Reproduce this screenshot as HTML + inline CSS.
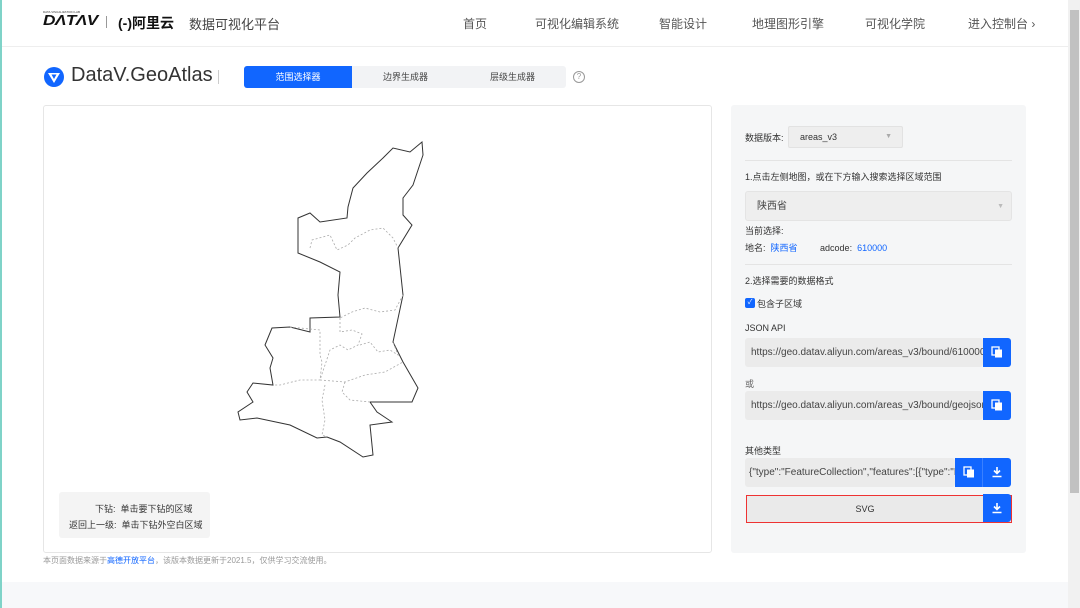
<!DOCTYPE html>
<html><head><meta charset="utf-8"><style>
*{margin:0;padding:0;box-sizing:border-box}
body{width:1080px;height:608px;overflow:hidden;background:#fff;font-family:"Liberation Sans","Noto Sans CJK SC",sans-serif;position:relative;color:#333}
.a{position:absolute;white-space:nowrap}
.nav{font-size:12px;color:#555;top:15px}
.f{font-size:9px;color:#333}
.inp{position:absolute;background:#ebebeb;border-radius:3px;font-size:10px;color:#444;line-height:29px;padding-left:6px;overflow:hidden;white-space:nowrap}
.btn{position:absolute;background:#1166ff;border-radius:0 3px 3px 0;width:28px;height:29px}
.btn svg{position:absolute;left:8px;top:8px}
</style></head><body>
<div class="a" style="left:0;top:0;width:2px;height:608px;background:#7fd3c8"></div>
<!-- header -->
<div class="a" style="left:43px;top:12px;font-weight:900;font-style:italic;font-size:15px;letter-spacing:-0.5px;color:#111;transform:scaleX(1.15);transform-origin:left">DΛTΛV</div>
<div class="a" style="left:43px;top:10px;font-size:3px;color:#333">DATA VISUALIZATION LAB</div>
<div class="a" style="left:106px;top:16px;width:1px;height:12px;background:#999"></div>
<div class="a" style="left:118px;top:13px;font-size:14px;font-weight:bold;color:#111">(-)阿里云</div>
<div class="a" style="left:189px;top:14px;font-size:13px;color:#444">数据可视化平台</div>
<div class="a nav" style="left:463px">首页</div>
<div class="a nav" style="left:535px">可视化编辑系统</div>
<div class="a nav" style="left:659px">智能设计</div>
<div class="a nav" style="left:752px">地理图形引擎</div>
<div class="a nav" style="left:865px">可视化学院</div>
<div class="a nav" style="left:968px">进入控制台 ›</div>
<div class="a" style="left:2px;top:46px;width:1066px;height:1px;background:#eee"></div>
<!-- scrollbar -->
<div class="a" style="left:1068px;top:0;width:12px;height:608px;background:#f1f1f1"></div>
<div class="a" style="left:1070px;top:10px;width:9px;height:483px;background:#c1c1c1"></div>
<!-- title row -->
<svg class="a" style="left:43px;top:66px" width="22" height="22" viewBox="0 0 22 22"><circle cx="11" cy="11" r="10" fill="#1166ff"/><path d="M5 7 L11 17 L17 7 Z M8.5 8.5 L13.5 8.5 L11 13 Z" fill="#fff" fill-rule="evenodd"/></svg>
<div class="a" style="left:71px;top:64px;font-size:20px;color:#333">DataV.GeoAtlas</div>
<div class="a" style="left:218px;top:70px;width:1px;height:14px;background:#ccc"></div>
<div class="a" style="left:244px;top:66px;width:322px;height:22px;background:#f2f3f5;border-radius:3px"></div>
<div class="a" style="left:244px;top:66px;width:108px;height:22px;background:#1166ff;border-radius:3px 0 0 3px;color:#fff;font-size:9px;line-height:22px;text-align:center">范围选择器</div>
<div class="a" style="left:352px;top:66px;width:107px;line-height:22px;text-align:center;font-size:9px;color:#444">边界生成器</div>
<div class="a" style="left:459px;top:66px;width:107px;line-height:22px;text-align:center;font-size:9px;color:#444">层级生成器</div>
<div class="a" style="left:573px;top:71px;width:12px;height:12px;border:1px solid #999;border-radius:50%;font-size:8px;line-height:10px;text-align:center;color:#999">?</div>
<!-- map box -->
<div class="a" style="left:43px;top:105px;width:669px;height:448px;border:1px solid #e6e6e6;border-radius:3px"></div>
<svg class="a" style="left:0;top:0" width="720" height="560">
<path d="M422 142 L423 155 L413 185 L403 198 L403 215 L412 225 L398 248 L403 295 L393 342 L403 362 L418 388 L412 402 L370 402 L377 412 L392 422 L370 425 L373 455 L363 457 L340 442 L327 437 L317 438 L290 425 L257 418 L240 420 L238 412 L253 402 L247 392 L253 383 L273 385 L270 368 L273 358 L265 345 L272 328 L290 327 L310 332 L310 318 L340 317 L338 295 L340 272 L320 262 L298 253 L298 218 L310 213 L320 222 L347 218 L348 207 L353 188 L367 173 L383 158 L393 148 L410 152 Z" fill="#fff" stroke="#333" stroke-width="1"/>
<g fill="none" stroke="#aaa" stroke-width="0.8" stroke-dasharray="2,2">
<path d="M310 248 L312 240 L330 235 L337 250 L348 245 L355 238 L370 230 L383 228 L393 238 L398 248"/>
<path d="M403 295 L395 310 L380 312 L365 308 L352 312 L340 318"/>
<path d="M340 318 L340 332 L352 330 L362 334 L358 345 L348 350 L340 345 L330 350 L325 365 L320 380"/>
<path d="M360 345 L370 342 L378 352 L390 350 L398 355 L393 342"/>
<path d="M290 327 L320 330 L320 355 L322 362 L320 380 L300 380 L280 385 L273 385"/>
<path d="M320 380 L345 382 L365 375 L385 372 L403 362"/>
<path d="M325 385 L322 400 L325 420 L322 435 L327 437"/>
<path d="M345 382 L342 392 L350 400 L370 402"/>
</g>
</svg>
<div class="a" style="left:59px;top:492px;width:151px;height:46px;background:#f4f4f4;border-radius:3px"></div>
<div class="a f" style="left:95px;top:502px">下钻: &nbsp;单击要下钻的区域</div>
<div class="a f" style="left:69px;top:518px">返回上一级: &nbsp;单击下钻外空白区域</div>
<div class="a" style="left:43px;top:555px;font-size:8px;color:#999">本页面数据来源于<span style="color:#1166ff">高德开放平台</span>，该版本数据更新于2021.5，仅供学习交流使用。</div>
<div class="a" style="left:2px;top:582px;width:1066px;height:26px;background:#f7f8fa"></div>
<!-- right panel -->
<div class="a" style="left:731px;top:105px;width:295px;height:448px;background:#f5f6f7;border-radius:3px"></div>
<div class="a f" style="left:745px;top:131px">数据版本:</div>
<div class="a" style="left:788px;top:126px;width:115px;height:22px;background:#eee;border:1px solid #e2e2e2;border-radius:2px;font-size:9px;line-height:20px;padding-left:11px;color:#333">areas_v3<span style="position:absolute;right:10px;color:#aaa;font-size:7px">▼</span></div>
<div class="a" style="left:745px;top:160px;width:267px;height:1px;background:#e4e4e4"></div>
<div class="a f" style="left:745px;top:170px">1.点击左侧地图，或在下方输入搜索选择区域范围</div>
<div class="a" style="left:745px;top:191px;width:267px;height:30px;background:#eeeeee;border:1px solid #e4e4e4;border-radius:3px;font-size:10px;line-height:30px;padding-left:11px;color:#444">陕西省<span style="position:absolute;right:7px;color:#bbb;font-size:7px">▼</span></div>
<div class="a f" style="left:745px;top:224px">当前选择:</div>
<div class="a f" style="left:745px;top:241px">地名: &nbsp;<span style="color:#1166ff">陕西省</span> &nbsp; &nbsp; &nbsp; &nbsp; adcode: &nbsp;<span style="color:#1166ff">610000</span></div>
<div class="a" style="left:745px;top:264px;width:267px;height:1px;background:#e4e4e4"></div>
<div class="a f" style="left:745px;top:274px">2.选择需要的数据格式</div>
<div class="a" style="left:745px;top:298px;width:10px;height:10px;background:#1166ff;border-radius:2px;color:#fff;font-size:7px;line-height:10px;text-align:center">✓</div>
<div class="a f" style="left:757px;top:297px">包含子区域</div>
<div class="a f" style="left:745px;top:323px">JSON API</div>
<div class="inp" style="left:745px;top:338px;width:238px;height:29px">https://geo.datav.aliyun.com/areas_v3/bound/610000_f</div>
<div class="btn" style="left:983px;top:338px"><svg width="12" height="12" viewBox="0 0 12 12"><rect x="1" y="1" width="7" height="8" fill="none" stroke="#fff" stroke-width="1.3"/><rect x="4" y="3.5" width="7" height="8" fill="#fff"/></svg></div>
<div class="a f" style="left:745px;top:377px;color:#666">或</div>
<div class="inp" style="left:745px;top:391px;width:238px;height:29px">https://geo.datav.aliyun.com/areas_v3/bound/geojson?</div>
<div class="btn" style="left:983px;top:391px"><svg width="12" height="12" viewBox="0 0 12 12"><rect x="1" y="1" width="7" height="8" fill="none" stroke="#fff" stroke-width="1.3"/><rect x="4" y="3.5" width="7" height="8" fill="#fff"/></svg></div>
<div class="a f" style="left:745px;top:444px">其他类型</div>
<div class="inp" style="left:745px;top:458px;width:210px;height:29px;padding-left:4px">{"type":"FeatureCollection","features":[{"type":"Fe</div>
<div class="btn" style="left:955px;top:458px;border-radius:0;border-right:1px solid #3a80ff"><svg width="12" height="12" viewBox="0 0 12 12"><rect x="1" y="1" width="7" height="8" fill="none" stroke="#fff" stroke-width="1.3"/><rect x="4" y="3.5" width="7" height="8" fill="#fff"/></svg></div>
<div class="btn" style="left:983px;top:458px"><svg width="12" height="12" viewBox="0 0 12 12"><path d="M6 1 V7 M3 4.5 L6 7.5 L9 4.5 M1.5 10.5 H10.5" stroke="#fff" stroke-width="1.6" fill="none"/></svg></div>
<div class="a" style="left:746px;top:495px;width:266px;height:28px;background:#eaeaea;border:1px solid #e33;font-size:9px;line-height:26px;text-align:center;padding-right:28px;color:#333">SVG</div>
<div class="btn" style="left:983px;top:494px;height:28px"><svg width="12" height="12" viewBox="0 0 12 12"><path d="M6 1 V7 M3 4.5 L6 7.5 L9 4.5 M1.5 10.5 H10.5" stroke="#fff" stroke-width="1.6" fill="none"/></svg></div>
</body></html>
